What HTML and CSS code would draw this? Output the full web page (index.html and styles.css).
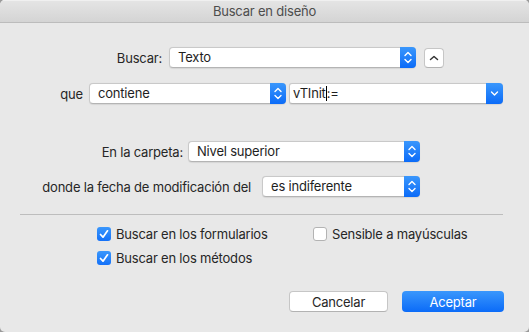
FILE: index.html
```html
<!DOCTYPE html>
<html lang="es">
<head>
    <meta charset="UTF-8">
    <title>Buscar en diseño</title>
    <link rel="stylesheet" href="styles.css">
</head>
<body>
<div class="window">
    <div class="titlebar">Buscar en diseño</div>

    <div class="content">
        <!-- Buscar -->
        <div class="row row-find">
            <span class="label lbl-find">Buscar:</span>
            <div class="popup pop-find">
                <span class="value">Texto</span>
                <span class="stepper">
                    <svg width="16" height="21" viewBox="0 0 16 21"><path d="M5 8.5 L8 5.5 L11 8.5 M5 12.5 L8 15.5 L11 12.5" fill="none" stroke="#fff" stroke-width="1.4" stroke-linecap="round" stroke-linejoin="round"/></svg>
                </span>
            </div>
            <button class="toggle">
                <svg width="10" height="6" viewBox="0 0 10 6"><path d="M1.5 4.5 L5 1.5 L8.5 4.5" fill="none" stroke="#333" stroke-width="1.5" stroke-linecap="round" stroke-linejoin="round"/></svg>
            </button>
        </div>

        <!-- que -->
        <div class="row row-que">
            <span class="label lbl-que">que</span>
            <div class="popup pop-que">
                <span class="value">contiene</span>
                <span class="stepper">
                    <svg width="16" height="21" viewBox="0 0 16 21"><path d="M5 8.5 L8 5.5 L11 8.5 M5 12.5 L8 15.5 L11 12.5" fill="none" stroke="#fff" stroke-width="1.4" stroke-linecap="round" stroke-linejoin="round"/></svg>
                </span>
            </div>
            <div class="combo">
                <span class="value">vTInit<span class="caret"></span>:=</span>
                <span class="stepper">
                    <svg width="17" height="21" viewBox="0 0 17 21"><path d="M5.5 9 L8.5 12 L11.5 9" fill="none" stroke="#fff" stroke-width="1.4" stroke-linecap="round" stroke-linejoin="round"/></svg>
                </span>
            </div>
        </div>

        <!-- carpeta -->
        <div class="row row-folder">
            <span class="label lbl-folder">En la carpeta:</span>
            <div class="popup pop-folder">
                <span class="value">Nivel superior</span>
                <span class="stepper">
                    <svg width="16" height="21" viewBox="0 0 16 21"><path d="M5 8.5 L8 5.5 L11 8.5 M5 12.5 L8 15.5 L11 12.5" fill="none" stroke="#fff" stroke-width="1.4" stroke-linecap="round" stroke-linejoin="round"/></svg>
                </span>
            </div>
        </div>

        <!-- fecha -->
        <div class="row row-date">
            <span class="label lbl-date">donde la fecha de modificación del</span>
            <div class="popup pop-date">
                <span class="value">es indiferente</span>
                <span class="stepper">
                    <svg width="16" height="21" viewBox="0 0 16 21"><path d="M5 8.5 L8 5.5 L11 8.5 M5 12.5 L8 15.5 L11 12.5" fill="none" stroke="#fff" stroke-width="1.4" stroke-linecap="round" stroke-linejoin="round"/></svg>
                </span>
            </div>
        </div>

        <div class="separator"></div>

        <div class="checks">
            <div class="check-row first">
                <label class="check col1"><span class="box on"><svg width="14" height="14" viewBox="0 0 14 14"><path d="M3.5 7.5 L6 10.2 L10.5 3.8" fill="none" stroke="#fff" stroke-width="1.7" stroke-linecap="round" stroke-linejoin="round"/></svg></span>Buscar en los formularios</label>
                <label class="check"><span class="box"></span>Sensible a mayúsculas</label>
            </div>
            <div class="check-row">
                <label class="check col1"><span class="box on"><svg width="14" height="14" viewBox="0 0 14 14"><path d="M3.5 7.5 L6 10.2 L10.5 3.8" fill="none" stroke="#fff" stroke-width="1.7" stroke-linecap="round" stroke-linejoin="round"/></svg></span>Buscar en los métodos</label>
            </div>
        </div>

        <div class="buttons">
            <button class="btn btn-cancel">Cancelar</button>
            <button class="btn btn-ok">Aceptar</button>
        </div>
    </div>
</div>
</body>
</html>
```

FILE: styles.css
```css
body {
    margin: 0;
    padding: 0;
    background-color: #9a9a9a;
    font-family: 'Inter', 'Roboto', sans-serif;
    font-size: 13px;
    letter-spacing: -0.2px;
    color: #262626;
}

.window {
    width: 529px;
    height: 332px;
    background: #e8e8e8;
    border-radius: 5px;
    overflow: hidden;
}

.titlebar {
    height: 22px;
    line-height: 22px;
    border-bottom: 1px solid #bcbcbc;
    background: linear-gradient(#e5e5e5, #d4d4d4);
    box-shadow: inset 0 1px #f0f0f0;
    text-align: center;
    color: #4d4d4d;
}

.content {
    padding-top: 24px;
}

.row {
    display: flex;
    align-items: center;
    height: 21px;
}

.label {
    text-align: right;
    white-space: nowrap;
}

.row-que { margin-top: 15px; }
.row-folder { margin-top: 37px; }
.row-date { margin-top: 14px; }

.lbl-find { width: 162px; margin-right: 7px; }
.lbl-que { width: 83px; margin-right: 6px; }
.lbl-folder { width: 183px; margin-right: 5px; }
.lbl-date { width: 251px; margin-right: 11px; }

.pop-find { width: 247px; }
.pop-que { width: 197px; }
.pop-folder { width: 232px; }
.pop-date { width: 158px; }

.popup,
.combo {
    box-sizing: border-box;
    height: 21px;
    display: flex;
    align-items: stretch;
    background: #fff;
    border: 1px solid #c9c9c9;
    border-bottom-color: #b4b4b4;
    border-radius: 4px;
    box-shadow: 0 0.5px 1px rgba(0, 0, 0, 0.08);
}

.combo {
    width: 214px;
    margin-left: 3px;
    border-radius: 3px 4px 4px 3px;
}

.value {
    flex: 1;
    padding-left: 8px;
    line-height: 19px;
    color: #1e1e1e;
    white-space: nowrap;
}

.combo .value {
    padding-left: 3px;
}

.caret {
    display: inline-block;
    width: 1px;
    height: 15px;
    background: #000;
    vertical-align: -3px;
}

.stepper {
    width: 16px;
    margin: -1px -1px -1px 0;
    border-radius: 0 4px 4px 0;
    background: linear-gradient(#3a97fc, #0b6bf8);
    display: flex;
    align-items: center;
    justify-content: center;
}

.combo .stepper {
    width: 17px;
}

.toggle {
    box-sizing: border-box;
    width: 20px;
    height: 20px;
    margin-left: 8px;
    align-self: flex-end;
    padding: 0;
    background: #fff;
    border: 1px solid #c6c6c6;
    border-bottom-color: #b2b2b2;
    border-radius: 4px;
    display: flex;
    align-items: center;
    justify-content: center;
}

.separator {
    height: 1px;
    background: #bdbdbd;
    margin: 17px 26px 0 20px;
}

.checks {
    padding-left: 97px;
}

.check-row {
    display: flex;
    height: 18px;
    margin-top: 6px;
}

.check-row.first {
    margin-top: 10px;
}

.check {
    display: flex;
    align-items: center;
    white-space: nowrap;
}

.col1 {
    width: 216px;
}

.box {
    box-sizing: border-box;
    width: 14px;
    height: 14px;
    margin-right: 5px;
    border-radius: 3px;
    background: #fff;
    border: 1px solid #b3b3b3;
    display: flex;
}

.box.on {
    border: none;
    background: linear-gradient(#3a97fc, #1471f8);
}

.buttons {
    display: flex;
    justify-content: flex-end;
    gap: 14px;
    padding-right: 25px;
    margin-top: 24px;
}

.btn {
    box-sizing: border-box;
    height: 21px;
    padding: 0;
    font-family: inherit;
    font-size: 13px;
    letter-spacing: inherit;
    border-radius: 4px;
}

.btn-cancel {
    width: 99px;
    background: #fff;
    color: #262626;
    border: 1px solid #c6c6c6;
    border-bottom-color: #b2b2b2;
}

.btn-ok {
    width: 102px;
    color: #fff;
    border: none;
    background: linear-gradient(#3a97fc, #0b6bf8);
}
```
